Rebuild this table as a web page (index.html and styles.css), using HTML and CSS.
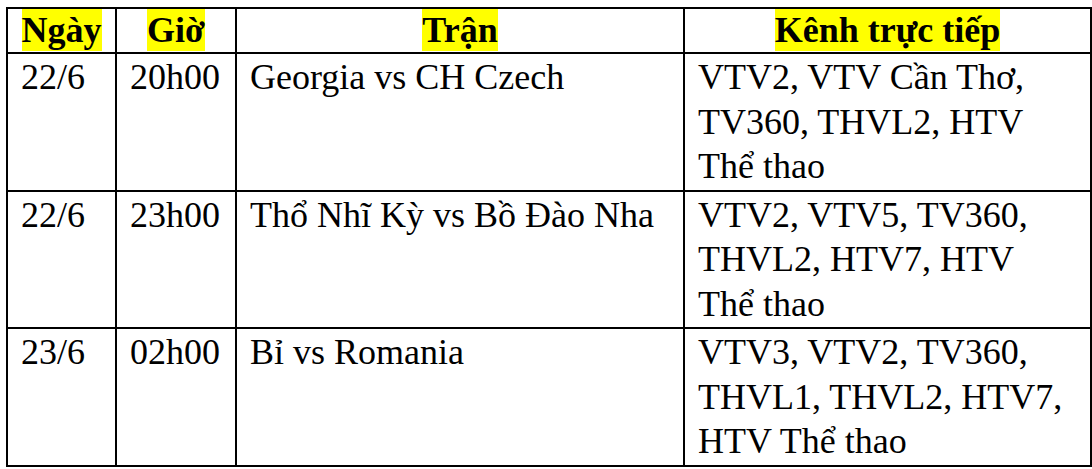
FILE: index.html
```html
<!DOCTYPE html>
<html lang="vi">
<head>
<meta charset="utf-8">
<title>Lịch trực tiếp</title>
<link rel="stylesheet" href="styles.css">
</head>
<body>
<div class="wrap">
<table class="schedule">
  <colgroup>
    <col class="c-date">
    <col class="c-time">
    <col class="c-match">
    <col class="c-channel">
  </colgroup>
  <thead>
    <tr class="head">
      <th><span class="hl">Ngày</span></th>
      <th><span class="hl">Giờ</span></th>
      <th><span class="hl">Trận</span></th>
      <th><span class="hl">Kênh trực tiếp</span></th>
    </tr>
  </thead>
  <tbody>
    <tr>
      <td>22/6</td>
      <td>20h00</td>
      <td>Georgia vs CH Czech</td>
      <td>VTV2, VTV Cần Thơ, TV360, THVL2, HTV Thể thao</td>
    </tr>
    <tr>
      <td>22/6</td>
      <td>23h00</td>
      <td>Thổ Nhĩ Kỳ vs Bồ Đào Nha</td>
      <td>VTV2, VTV5, TV360, THVL2, HTV7, HTV Thể thao</td>
    </tr>
    <tr>
      <td>23/6</td>
      <td>02h00</td>
      <td>Bỉ vs Romania</td>
      <td>VTV3, VTV2, TV360, THVL1, THVL2, HTV7, HTV Thể thao</td>
    </tr>
  </tbody>
</table>
</div>
</body>
</html>
```

FILE: styles.css
```css
html, body {
  margin: 0;
  padding: 0;
  background: #ffffff;
}

.wrap {
  padding: 7px 2px 0 6px;
}

.schedule {
  border-collapse: collapse;
  table-layout: fixed;
  width: 1084px;
  font-family: "Liberation Serif", "DejaVu Serif", serif;
  font-size: 36px;
  line-height: 44.5px;
  color: #000;
}

.c-date { width: 109px; }
.c-time { width: 120px; }
.c-match { width: 448px; }
.c-channel { width: 407px; }

.schedule th,
.schedule td {
  border: 2px solid #000;
  padding: 1px 12px 1px 13px;
  vertical-align: top;
  text-align: left;
}

.schedule th {
  text-align: center;
  vertical-align: middle;
  font-weight: bold;
  line-height: 43px;
  height: 43px;
  padding: 0 4px;
}

.hl {
  display: inline-block;
  background: #ffff00;
  line-height: 42px;
  height: 42px;
}

.schedule td:nth-child(4) {
  padding-right: 20px;
}
```
